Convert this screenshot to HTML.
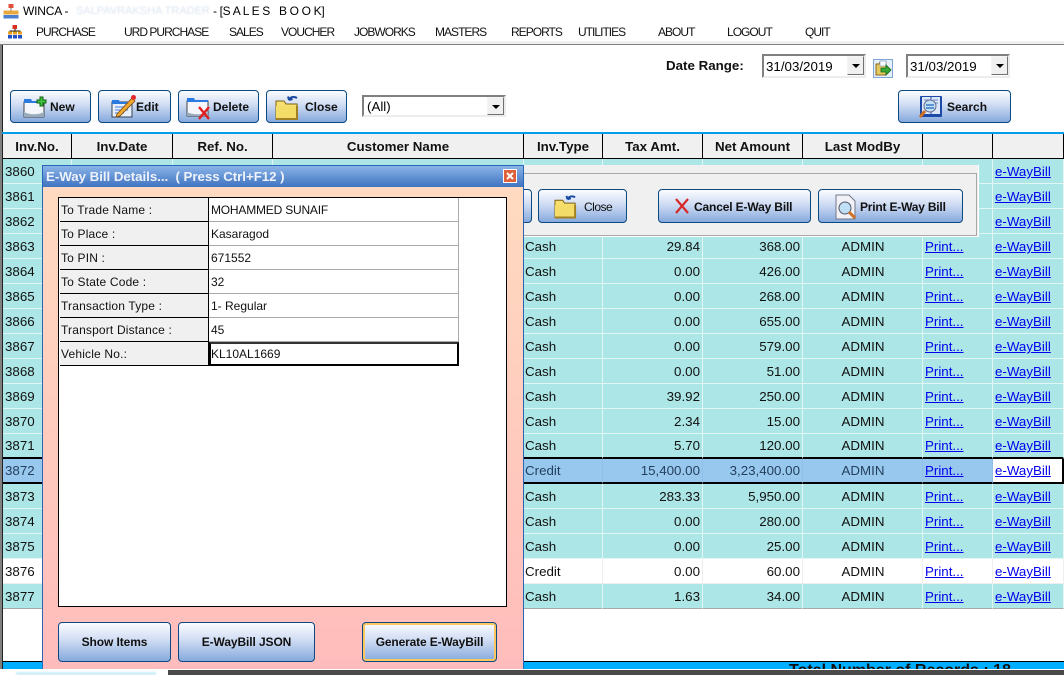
<!DOCTYPE html>
<html><head><meta charset="utf-8"><style>
html,body{margin:0;padding:0;background:#fff}
body{width:1064px;height:675px;position:relative;overflow:hidden;font-family:"Liberation Sans",sans-serif;color:#000}
.a{position:absolute;white-space:nowrap}
.m{position:absolute;top:25px;font-size:12px;letter-spacing:-.98px;line-height:15px;color:#111}
.b{position:absolute;box-sizing:border-box;border:1px solid #0b4a80;border-radius:4px;background:linear-gradient(#fbfcff,#cfdcf3 45%,#86a9dd);font-weight:bold;font-size:12px;text-align:center;color:#111}
.b span{position:absolute;white-space:nowrap}
.b svg{position:absolute}
.cb{position:absolute;box-sizing:border-box;background:#fff;border:2px solid;border-color:#808080 #ececec #ececec #808080;font-size:13.33px;line-height:21px;padding-left:3px}
.cb i{position:absolute;right:0;top:0;width:17px;height:19px;box-sizing:border-box;background:#f0f0f0;border:1px solid;border-color:#f4f4f4 #707070 #707070 #f4f4f4}
.cb i:after{content:"";position:absolute;left:4px;top:7px;border:4px solid transparent;border-top:4px solid #000;border-bottom:0}
table{border-collapse:separate;border-spacing:0;table-layout:fixed;position:absolute;left:3px;top:134px;width:1061px;font-size:13.33px}
th{height:23px;padding:1px 0 0;background:#f0f0f0;border-right:1px solid #000;border-bottom:1px solid #000;box-sizing:content-box;font-size:13.33px;line-height:23px;color:#111}
td{height:23px;padding:1px 2px 0;line-height:23px;background:#ace6e6;border-right:1px solid #e2f6f6;border-bottom:1px solid #e2f6f6;white-space:nowrap;overflow:hidden;color:#111}
td.n{text-align:right;padding-right:2px}
td.c{text-align:center;padding-left:3px}
td.t{padding-left:1px}
td a{color:#00e;text-decoration:underline}
tr.s td{background:#99c8ee;color:#24405f;border-right-color:#8fbee6;border-bottom:2px solid #000;height:22px;line-height:22px}
tr.p td{border-bottom:2px solid #000;height:22px;line-height:22px}
tr.s td:last-child{background:#fff;border-right:2px solid #000}
tr.w td{background:#fff;border-color:#eee}
tr.l td{border-bottom:1px solid #a8a8a8}
.g{position:absolute;font-size:12px;line-height:25px;box-sizing:border-box;white-space:nowrap;color:#111}
.gl{left:60px;width:149px;background:#f0f0f0;border-bottom:1px solid #000;border-right:1px solid #000;padding-left:1px;letter-spacing:.17px}
.gv{left:209px;width:250px;background:#fff;border-bottom:1px solid #aaa;border-right:1px solid #aaa;padding-left:2px}
</style></head><body>

<svg class="a" style="left:2px;top:3px" width="18" height="17" viewBox="0 0 18 17"><rect x="6.500" y="1" width="5" height="4" fill="#e0503a"/><path d="M9 5v3M4 11V8h10v3" stroke="#777" fill="none"/><rect x="1.500" y="7.500" width="5" height="4" fill="#e8a840"/><rect x="6.500" y="7.500" width="5" height="4" fill="#e8a840"/><rect x="11.500" y="7.500" width="5" height="4" fill="#e8a840"/><rect x="1.500" y="12" width="5" height="3.500" fill="#4a80d0"/><rect x="6.500" y="12" width="5" height="3.500" fill="#4a80d0"/><rect x="11.500" y="12" width="5" height="3.500" fill="#4a80d0"/></svg>
<div class="a" style="left:23px;top:4px;font-size:12px;line-height:15px;letter-spacing:-.2px">WINCA -</div>
<div class="a" style="left:76px;top:4px;font-size:11px;line-height:15px;color:#dce6f0;filter:blur(.7px)">SALPAVRAKSHA TRADER</div>
<div class="a" style="left:213px;top:4px;font-size:12px;line-height:15px;letter-spacing:-.33px">- [S A L E S &nbsp; B O O K]</div>

<svg class="a" style="left:7px;top:25px" width="16" height="14" viewBox="0 0 16 14"><rect x="5.500" y="0" width="4.500" height="4" fill="#d8301c"/><path d="M8 4v2M3 8V6h10v2" stroke="#222" fill="none"/><rect x="1" y="6.500" width="4" height="3" fill="#e8a020"/><rect x="6" y="6.500" width="4" height="3" fill="#e8a020"/><rect x="11" y="6.500" width="4" height="3" fill="#e8a020"/><rect x="1" y="10" width="4" height="3.500" fill="#2050c8"/><rect x="6" y="10" width="4" height="3.500" fill="#2050c8"/><rect x="11" y="10" width="4" height="3.500" fill="#2050c8"/></svg>
<div class="m" style="left:36px">PURCHASE</div>
<div class="m" style="left:124px">URD PURCHASE</div>
<div class="m" style="left:229px">SALES</div>
<div class="m" style="left:281px">VOUCHER</div>
<div class="m" style="left:354px">JOBWORKS</div>
<div class="m" style="left:435px">MASTERS</div>
<div class="m" style="left:511px">REPORTS</div>
<div class="m" style="left:578px">UTILITIES</div>
<div class="m" style="left:658px">ABOUT</div>
<div class="m" style="left:727px">LOGOUT</div>
<div class="m" style="left:805px">QUIT</div>

<div class="a" style="left:0;top:41px;width:1064px;height:3px;background:#f0f0f0"></div>
<div class="a" style="left:0;top:44px;width:1064px;height:1px;background:#808080"></div>
<div class="a" style="left:0;top:44px;width:2px;height:625px;background:#808080"></div>
<div class="a" style="left:2px;top:45px;width:1px;height:624px;background:#222"></div>

<div class="a" style="left:666px;top:58px;font-size:13.33px;font-weight:bold;line-height:15px;color:#111">Date Range:</div>
<div class="cb" style="left:762px;top:54px;width:104px;height:24px;padding-left:2px">31/03/2019<i></i></div>
<div class="cb" style="left:906px;top:54px;width:104px;height:24px;padding-left:2px">31/03/2019<i></i></div>
<div class="a" style="left:873px;top:59px;width:20px;height:19px;box-sizing:border-box;border:1px solid #7fa6d8;background:#e6eef8"></div>
<svg class="a" style="left:875px;top:60px" width="17" height="17" viewBox="0 0 17 17"><path d="M1 15V4h3l1-2h6v13z" fill="#e4c860" stroke="#8a6a20"/><rect x="5" y="1" width="6" height="5" fill="#fff" stroke="#8aa0c0" stroke-width=".7"/><path d="M6 8h5V5l5 5-5 5v-3H6z" fill="#38a838" stroke="#176a17" stroke-width=".8"/></svg>

<div class="b" style="left:10px;top:90px;width:81px;height:33px"><svg style="left:12px;top:5px" width="26" height="22" viewBox="0 0 26 22"><rect x="1" y="6" width="20" height="15" fill="#f4f6fb" stroke="#444"/><path d="M1 6V3h7l1 2h12v2H1z" fill="#2a7ae0"/><path d="M1 21h20v-5c-6 3-14 3-20 0z" fill="#9ab"/><path d="M17 1h3v3h3v3h-3v3h-3V7h-3V4h3z" fill="#3ec43e" stroke="#146014"/></svg><span style="left:39px;top:9px">New</span></div>

<div class="b" style="left:98px;top:90px;width:73px;height:33px"><svg style="left:11px;top:3px" width="26" height="25" viewBox="0 0 26 25"><rect x="2" y="8" width="20" height="15" fill="#e8effa" stroke="#345"/><path d="M2 8V6h7l1 2h12v2H2z" fill="#2a7ae0"/><path d="M5 13h13M5 16h13M5 19h9" stroke="#4a80d8"/><path d="M7 20l15-16 3 3-15 15-4 1z" fill="#f0a830" stroke="#7a4a10" stroke-width=".8"/><circle cx="23.500" cy="3.500" r="2.500" fill="#e02828"/></svg><span style="left:37px;top:9px">Edit</span></div>

<div class="b" style="left:178px;top:90px;width:81px;height:33px"><svg style="left:7px;top:5px" width="27" height="24" viewBox="0 0 27 24"><rect x="1" y="5" width="21" height="15" fill="#f4f6fb" stroke="#444"/><path d="M1 5V2h7l1 2h13v2H1z" fill="#2a7ae0"/><path d="M1 20h21v-4c-7 3-15 3-21 0z" fill="#9ab"/><path d="M13 11l10 12M23 11L13 23" stroke="#e02020" stroke-width="2.400"/></svg><span style="left:34px;top:9px">Delete</span></div>

<div class="b" style="left:266px;top:90px;width:81px;height:33px"><svg style="left:8px;top:3px" width="25" height="26" viewBox="0 0 25 26"><path d="M1 25V7h8l2 3h11v15z" fill="#f8e070" stroke="#7a6010"/><path d="M1 25h21V12H1z" fill="#f4dc68"/><path d="M22 12v13H1" fill="none" stroke="#a08020" stroke-width="2"/><path d="M14 6c1-3 5-4 8-2M14 6l-1-3.500M14 6l3.500-1" stroke="#1a4aa0" stroke-width="2" fill="none"/></svg><span style="left:38px;top:9px">Close</span></div>

<div class="cb" style="left:362px;top:95px;width:144px;height:22px;padding-left:3px;line-height:19px">(All)<i style="height:18px"></i></div>

<div class="b" style="left:898px;top:90px;width:113px;height:33px"><svg style="left:19px;top:3px" width="25" height="26" viewBox="0 0 25 26"><rect x="2" y="2" width="22" height="21" rx="1" fill="#1c4aa8"/><rect x="4" y="3" width="18" height="17" fill="#dce8fa"/><path d="M13 3v17" stroke="#1c4aa8"/><path d="M6 6h5M15 6h5M15 9h5" stroke="#6a8ac0"/><circle cx="12" cy="12" r="6" fill="#c0e0f4" stroke="#668"/><path d="M8 11h8M8 14h8" stroke="#3a78c8" stroke-width="1.500"/><path d="M7 17l-5 6" stroke="#d07020" stroke-width="3"/></svg><span style="left:48px;top:9px">Search</span></div>

<div class="a" style="left:2px;top:132px;width:1062px;height:2px;background:#009ee8"></div>

<table>
<colgroup><col style="width:69px"><col style="width:101px"><col style="width:100px"><col style="width:251px"><col style="width:79px"><col style="width:100px"><col style="width:100px"><col style="width:120px"><col style="width:70px"><col style="width:71px"></colgroup>
<tr><th>Inv.No.</th><th>Inv.Date</th><th>Ref. No.</th><th>Customer Name</th><th>Inv.Type</th><th>Tax Amt.</th><th>Net Amount</th><th>Last ModBy</th><th></th><th></th></tr>
<tr><td>3860</td><td></td><td></td><td></td><td></td><td></td><td></td><td></td><td></td><td><a>e-WayBill</a></td></tr>
<tr><td>3861</td><td></td><td></td><td></td><td></td><td></td><td></td><td></td><td></td><td><a>e-WayBill</a></td></tr>
<tr><td>3862</td><td></td><td></td><td></td><td></td><td></td><td></td><td></td><td></td><td><a>e-WayBill</a></td></tr>
<tr><td>3863</td><td></td><td></td><td></td><td class="t">Cash</td><td class="n">29.84</td><td class="n">368.00</td><td class="c">ADMIN</td><td><a>Print...</a></td><td><a>e-WayBill</a></td></tr>
<tr><td>3864</td><td></td><td></td><td></td><td class="t">Cash</td><td class="n">0.00</td><td class="n">426.00</td><td class="c">ADMIN</td><td><a>Print...</a></td><td><a>e-WayBill</a></td></tr>
<tr><td>3865</td><td></td><td></td><td></td><td class="t">Cash</td><td class="n">0.00</td><td class="n">268.00</td><td class="c">ADMIN</td><td><a>Print...</a></td><td><a>e-WayBill</a></td></tr>
<tr><td>3866</td><td></td><td></td><td></td><td class="t">Cash</td><td class="n">0.00</td><td class="n">655.00</td><td class="c">ADMIN</td><td><a>Print...</a></td><td><a>e-WayBill</a></td></tr>
<tr><td>3867</td><td></td><td></td><td></td><td class="t">Cash</td><td class="n">0.00</td><td class="n">579.00</td><td class="c">ADMIN</td><td><a>Print...</a></td><td><a>e-WayBill</a></td></tr>
<tr><td>3868</td><td></td><td></td><td></td><td class="t">Cash</td><td class="n">0.00</td><td class="n">51.00</td><td class="c">ADMIN</td><td><a>Print...</a></td><td><a>e-WayBill</a></td></tr>
<tr><td>3869</td><td></td><td></td><td></td><td class="t">Cash</td><td class="n">39.92</td><td class="n">250.00</td><td class="c">ADMIN</td><td><a>Print...</a></td><td><a>e-WayBill</a></td></tr>
<tr><td>3870</td><td></td><td></td><td></td><td class="t">Cash</td><td class="n">2.34</td><td class="n">15.00</td><td class="c">ADMIN</td><td><a>Print...</a></td><td><a>e-WayBill</a></td></tr>
<tr class="p"><td>3871</td><td></td><td></td><td></td><td class="t">Cash</td><td class="n">5.70</td><td class="n">120.00</td><td class="c">ADMIN</td><td><a>Print...</a></td><td><a>e-WayBill</a></td></tr>
<tr class="s"><td>3872</td><td></td><td></td><td></td><td class="t">Credit</td><td class="n">15,400.00</td><td class="n">3,23,400.00</td><td class="c">ADMIN</td><td><a>Print...</a></td><td><a>e-WayBill</a></td></tr>
<tr><td>3873</td><td></td><td></td><td></td><td class="t">Cash</td><td class="n">283.33</td><td class="n">5,950.00</td><td class="c">ADMIN</td><td><a>Print...</a></td><td><a>e-WayBill</a></td></tr>
<tr><td>3874</td><td></td><td></td><td></td><td class="t">Cash</td><td class="n">0.00</td><td class="n">280.00</td><td class="c">ADMIN</td><td><a>Print...</a></td><td><a>e-WayBill</a></td></tr>
<tr><td>3875</td><td></td><td></td><td></td><td class="t">Cash</td><td class="n">0.00</td><td class="n">25.00</td><td class="c">ADMIN</td><td><a>Print...</a></td><td><a>e-WayBill</a></td></tr>
<tr class="w"><td>3876</td><td></td><td></td><td></td><td class="t">Credit</td><td class="n">0.00</td><td class="n">60.00</td><td class="c">ADMIN</td><td><a>Print...</a></td><td><a>e-WayBill</a></td></tr>
<tr class="l"><td>3877</td><td></td><td></td><td></td><td class="t">Cash</td><td class="n">1.63</td><td class="n">34.00</td><td class="c">ADMIN</td><td><a>Print...</a></td><td><a>e-WayBill</a></td></tr>
</table>

<!-- footer -->
<div class="a" style="left:3px;top:661px;width:1061px;height:8px;background:#00aeff;border-top:1px solid #000;box-sizing:border-box;overflow:hidden"></div>
<div class="a" style="left:789px;top:662px;height:7px;width:240px;overflow:hidden;font-size:16px;font-weight:bold;line-height:18px;color:#111">Total Number of Records : 18</div>
<div class="a" style="left:0;top:669px;width:1064px;height:6px;background:#fff"></div>
<div class="a" style="left:168px;top:670px;width:896px;height:5px;background:#4a4a4a"></div>
<div class="a" style="left:16px;top:672px;width:140px;height:3px;background:#cdeef8;filter:blur(.8px)"></div>

<!-- right toolbar panel -->
<div class="a" style="left:523px;top:165px;width:456px;height:72px;background:#f0f0f0;box-sizing:border-box;border-right:1px solid #fff;border-bottom:1px solid #fff"></div>
<div class="a" style="left:523px;top:173px;width:454px;height:63px;box-sizing:border-box;border:1px solid #a8a8a8;border-left:0"></div>
<div class="b" style="left:510px;top:189px;width:22px;height:34px"></div>
<div class="b" style="left:538px;top:189px;width:89px;height:34px;font-weight:normal"><svg style="left:15px;top:3px" width="24" height="26" viewBox="0 0 25 26"><path d="M1 25V7h8l2 3h11v15z" fill="#f8e070" stroke="#7a6010"/><path d="M1 25h21V12H1z" fill="#f4dc68"/><path d="M22 12v13H1" fill="none" stroke="#a08020" stroke-width="2"/><path d="M14 6c1-3 5-4 8-2M14 6l-1-3.500M14 6l3.500-1" stroke="#1a4aa0" stroke-width="2" fill="none"/></svg><span style="left:45px;top:10px;letter-spacing:-.5px">Close</span></div>
<div class="b" style="left:658px;top:189px;width:153px;height:34px"><svg style="left:15px;top:7px" width="16" height="18" viewBox="0 0 16 18"><path d="M2 2l12 14M14 2L2 16" stroke="#d82828" stroke-width="2.200"/></svg><span style="left:35px;top:10px;letter-spacing:-.15px">Cancel E-Way Bill</span></div>
<div class="b" style="left:818px;top:189px;width:145px;height:34px"><svg style="left:16px;top:4px" width="22" height="26" viewBox="0 0 22 26"><path d="M1 1h13l6 6v18H1z" fill="#f0f2f8" stroke="#778"/><circle cx="10" cy="14" r="6" fill="#bfe0f4" stroke="#556"/><path d="M14 18l6 6" stroke="#d07020" stroke-width="3"/></svg><span style="left:41px;top:10px;letter-spacing:-.2px">Print E-Way Bill</span></div>

<!-- dialog -->
<div class="a" style="left:42px;top:165px;width:482px;height:504px;box-sizing:border-box;border:1px solid #2a66b8;border-bottom:0;background:linear-gradient(#ffdcc0,#ffbcbc)"></div>
<div class="a" style="left:43px;top:166px;width:480px;height:21px;background:linear-gradient(#8ab4e8,#3f72c0)"></div>
<div class="a" style="left:46px;top:168px;font-size:13.33px;font-weight:bold;line-height:17px;letter-spacing:-.05px;color:#eef2fa">E-Way Bill Details... &nbsp;( Press Ctrl+F12 )</div>
<div class="a" style="left:503px;top:169px;width:14px;height:14px;box-sizing:border-box;border:1px solid #fff;background:#e0603a"></div>
<svg class="a" style="left:503px;top:169px" width="14" height="14" viewBox="0 0 14 14"><path d="M4 4l6 6M10 4l-6 6" stroke="#fff" stroke-width="2"/></svg>

<div class="a" style="left:58px;top:197px;width:449px;height:410px;box-sizing:border-box;border:1px solid #000;background:#fff"></div>
<div class="g gl" style="top:198px;height:24px">To Trade Name :</div><div class="g gv" style="top:198px;height:24px;letter-spacing:-.2px">MOHAMMED SUNAIF</div>
<div class="g gl" style="top:222px;height:24px">To Place :</div><div class="g gv" style="top:222px;height:24px">Kasaragod</div>
<div class="g gl" style="top:246px;height:24px">To PIN :</div><div class="g gv" style="top:246px;height:24px">671552</div>
<div class="g gl" style="top:270px;height:24px">To State Code :</div><div class="g gv" style="top:270px;height:24px">32</div>
<div class="g gl" style="top:294px;height:24px">Transaction Type :</div><div class="g gv" style="top:294px;height:24px">1- Regular</div>
<div class="g gl" style="top:318px;height:24px">Transport Distance :</div><div class="g gv" style="top:318px;height:24px">45</div>
<div class="g gl" style="top:342px;height:24px;border-bottom:1px solid #000">Vehicle No.:</div><div class="g gv" style="top:342px;height:24px;border:2px solid #000;border-top-color:#333;line-height:21px;padding-left:0">KL10AL1669</div>

<div class="b" style="left:58px;top:622px;width:113px;height:40px;letter-spacing:-.1px"><span style="left:0;right:0;top:12px">Show Items</span></div>
<div class="b" style="left:178px;top:622px;width:137px;height:40px;letter-spacing:-.1px"><span style="left:0;right:0;top:12px">E-WayBill JSON</span></div>
<div class="b" style="left:362px;top:622px;width:135px;height:40px;box-shadow:inset 0 0 0 2px #fdc75f;letter-spacing:-.15px"><span style="left:0;right:0;top:12px">Generate E-WayBill</span></div>

</body></html>
